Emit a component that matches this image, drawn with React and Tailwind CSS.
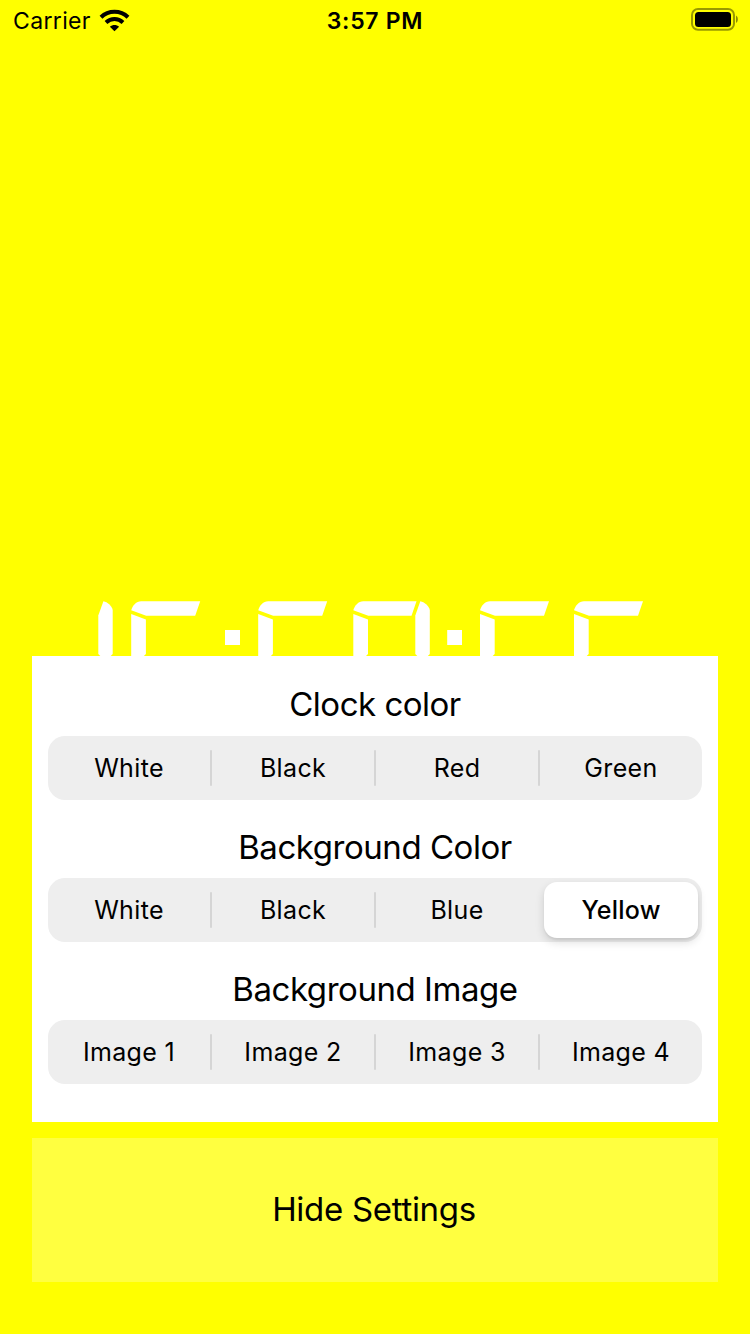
import React from "react";

const FIVE_TOP = "M0 9.2C1.5 4.5 5 0.3 10 0.3H69L64 14.7H15Z";
const LEFT_BAR = "M0 13L14.7 18.5V53L12.7 55H0Z";

function Clock() {
  return (
    <svg role="img" aria-label="Digital clock" className="block h-[55px] w-[545px]" viewBox="0 0 545 55" fill="#fff">
      <path d="M0.3 14.5L5.4 0.3C9.5 1 13.5 4.5 14.7 9V53L12.7 55H2.3L0.3 53Z" />
      {[33.2, 160.2, 382, 476].map((x) => (
        <g key={x} transform={`translate(${x} 0)`}>
          <path d={FIVE_TOP} />
          <path d={LEFT_BAR} />
        </g>
      ))}
      <g transform="translate(255.3 0)">
        <path d="M0 9.2C1.5 4.5 5 0.3 10 0.3H63.2L58.2 14.7H15Z" />
        <path d={LEFT_BAR} />
        <path d="M62 14.5L67 0.3C71 1 75.3 4.5 76.5 9V53L74.5 55H64L62 53Z" />
      </g>
      <rect x="127" y="29" width="15" height="15" />
      <rect x="349.2" y="29" width="14.8" height="15" />
    </svg>
  );
}

function Segmented({ options, selected }) {
  return (
    <div className="grid h-16 grid-cols-[164px_164px_164px_162px] rounded-[17px] bg-[#eeeeee] text-[25px]">
      {options.map((label, i) => {
        const on = i === selected;
        const last = i === options.length - 1;
        const line = !last && i + 1 !== selected;
        return (
          <div key={label} className="flex items-center">
            {on ? (
              <button className="mx-1 flex h-14 flex-1 items-center justify-center rounded-[13px] bg-white pt-0.5 font-medium tracking-[0.2px] shadow-[0_4px_10px_rgba(0,0,0,0.14),0_2px_2px_rgba(0,0,0,0.05)]">
                {label}
              </button>
            ) : (
              <button className="flex flex-1 justify-center pt-0.5 tracking-[0.35px]">{label}</button>
            )}
            {!last && <div className={line ? "h-9 w-0.5 rounded-full bg-[#d5d5d5]" : "w-0.5"} />}
          </div>
        );
      })}
    </div>
  );
}

function Setting({ title, options, selected = -1, className }) {
  return (
    <div className="flex flex-col gap-2">
      <h2 className={`flex h-[46px] items-center justify-center text-[33px] leading-none ${className}`}>{title}</h2>
      <Segmented options={options} selected={selected} />
    </div>
  );
}

export default function App() {
  return (
    <main className="flex h-[1334px] w-[750px] flex-col overflow-hidden bg-[#ffff00] font-['Inter',sans-serif] text-black">
      <header className="grid h-10 grid-cols-3 items-center pl-[13px] pr-[11px]">
        <div className="flex items-center gap-2">
          <span className="pt-0.5 text-[23px] tracking-[0.35px]">Carrier</span>
          <svg className="h-[23px] w-[31px]" viewBox="0 0 31 23" fill="none" stroke="#000" strokeWidth="4.1">
            <path d="M2 8.2C9.5 1 21.5 1 29 8.2" />
            <path d="M7 13.4C12 8.9 19 8.9 24 13.4" />
            <path d="M15.5 22.3L10.9 17.7C13.5 15.3 17.5 15.3 20.1 17.7Z" fill="#000" stroke="none" />
          </svg>
        </div>
        <div className="pr-[2px] pt-0.5 text-center text-[23px] font-semibold tracking-[0.7px]">3:57 PM</div>
        <svg className="-mt-px h-[23px] w-[48px] justify-self-end" viewBox="0 0 48 23">
          <rect x="1" y="1" width="42" height="20.7" rx="6" fill="none" stroke="#000" strokeOpacity="0.4" strokeWidth="2" />
          <rect x="4" y="4" width="36" height="15" rx="3.5" />
          <path d="M45 7.5C47.5 9 47.5 13.5 45 15Z" fillOpacity="0.45" />
        </svg>
      </header>
      <div className="flex h-[616px] items-end pl-[98px]">
        <Clock />
      </div>
      <section className="mx-8 flex h-[466px] flex-col gap-6 bg-white px-4 pt-[26px]">
        <Setting title="Clock color" options={["White", "Black", "Red", "Green"]} className="pb-[2px] tracking-[-0.5px]" />
        <Setting title="Background Color" options={["White", "Black", "Blue", "Yellow"]} selected={3} className="tracking-[-0.45px]" />
        <Setting title="Background Image" options={["Image 1", "Image 2", "Image 3", "Image 4"]} className="tracking-[-0.45px]" />
      </section>
      <button className="mx-8 mt-4 flex h-36 items-center justify-center bg-[#ffff40] pr-0.5 text-[33px] tracking-[-0.3px]">
        Hide Settings
      </button>
    </main>
  );
}
